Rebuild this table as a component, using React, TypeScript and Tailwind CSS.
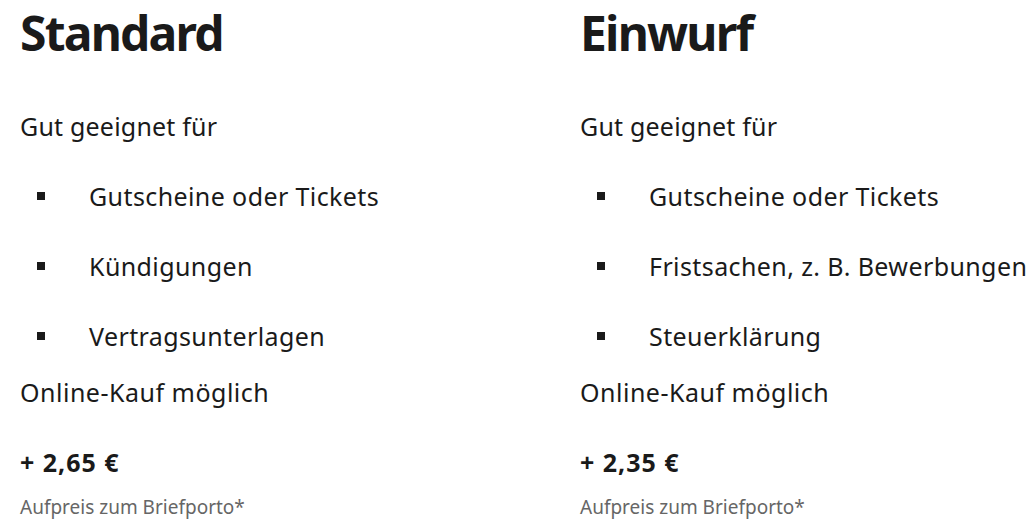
import React from 'react';

type Offer = {
  title: string;
  items: string[];
  price: string;
};

const offers: Offer[] = [
  {
    title: 'Standard',
    items: ['Gutscheine oder Tickets', 'Kündigungen', 'Vertragsunterlagen'],
    price: '+ 2,65 €',
  },
  {
    title: 'Einwurf',
    items: ['Gutscheine oder Tickets', 'Fristsachen, z. B. Bewerbungen', 'Steuerklärung'],
    price: '+ 2,35 €',
  },
];

function OfferColumn({ offer }: { offer: Offer }) {
  return (
    <div className="flex flex-col">
      <h2 className="text-[48px] font-bold leading-[62px] mt-0.5 tracking-[-1.8px]">{offer.title}</h2>

      <p className="text-[25px] leading-[36px] mt-[44px] tracking-[0.2px]">Gut geeignet für</p>

      {/* Liste */}
      <ul className="flex flex-col gap-[34px] mt-[34px] pl-[17px]">
        {offer.items.map((item) => (
          <li key={item} className="flex items-center gap-[44px] text-[25px] leading-[36px] tracking-[0.4px]">
            <span className="w-2 h-2 bg-[#1a1a1a] shrink-0" />
            <span className="whitespace-nowrap">{item}</span>
          </li>
        ))}
      </ul>

      <p className="text-[25px] leading-[36px] mt-5 tracking-[0.5px]">Online-Kauf möglich</p>

      <p className="text-[25px] leading-[36px] font-bold mt-[34px] tracking-[1px]">{offer.price}</p>
      <p className="text-[19px] leading-[27px] text-[#666666] mt-[14px]">Aufpreis zum Briefporto*</p>
    </div>
  );
}

export default function App() {
  return (
    <div
      className="w-[1036px] h-[531px] overflow-hidden bg-white text-[#1a1a1a] pl-5"
      style={{ fontFamily: '"Noto Sans", "Open Sans", sans-serif' }}
    >
      <div className="grid grid-cols-[560px_1fr]">
        {offers.map((offer) => (
          <OfferColumn key={offer.title} offer={offer} />
        ))}
      </div>
    </div>
  );
}
